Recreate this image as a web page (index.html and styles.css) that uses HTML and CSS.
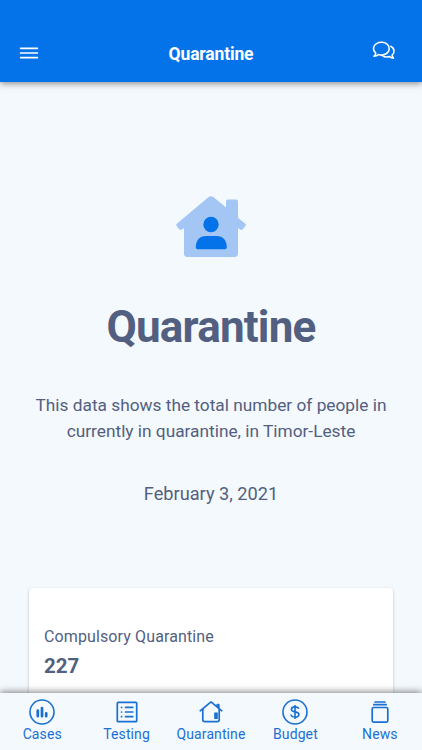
FILE: index.html
```html
<!DOCTYPE html>
<html lang="en">
<head>
    <meta charset="UTF-8">
    <meta name="viewport" content="width=device-width, initial-scale=1.0">
    <title>Quarantine</title>
    <link rel="stylesheet" href="styles.css">
</head>
<body>
    <div class="app">
        <header class="header">
            <button class="icon-button menu-button" aria-label="Menu">
                <svg width="20" height="12" viewBox="0 0 20 12" fill="none" stroke="currentColor" stroke-width="1.7" stroke-linecap="round">
                    <path d="M1.6 1.3h16.800M1.6 6h16.800M1.6 10.600h16.800"/>
                </svg>
            </button>
            <h2 class="header-title">Quarantine</h2>
            <button class="icon-button chat-button" aria-label="Chat">
                <svg width="24" height="20" viewBox="0 0 24 20" fill="none" stroke="currentColor" stroke-width="1.6" stroke-linecap="round" stroke-linejoin="round">
                    <path d="M3.8 12.3C.2 9.1 1 4.600 4.500 2.600C8 .5 12.900 .9 15.500 3.500C18.200 6.200 17.700 10.300 14.600 12.500C12.300 14.100 9.200 14.500 6.500 13.500C5.300 14.700 3.700 15.200 1.900 15.300C3.100 14.300 3.700 13.400 3.800 12.300z"/>
                    <path d="M18.800 5.300C22.600 7.300 23 11.700 20.100 14.100C20.200 15.300 20.700 16.300 21.500 17.200C20.100 17.200 18.700 16.700 17.600 15.500C15 16.400 12 15.900 10.100 14.300"/>
                </svg>
            </button>
        </header>

        <main class="content">
            <section class="intro">
                <svg class="intro-icon" width="70" height="62" viewBox="0 0 70 62">
                    <path fill="#a3c6f5" d="M32.300 1.300Q35 -.8 37.700 1.300L50 11.600V5.500Q50 3.500 52 3.500H60Q62 3.500 62 5.500V21.700L69.300 27.800Q70.300 28.800 69.500 29.800L66.800 33.200Q65.500 34.500 64 33.500L62 31.900V57.500Q62 61 58.500 61H11.500Q8 61 8 57.500V31.900L6 33.500Q4.500 34.500 3.200 33.200L.6 29.800Q-.3 28.800 .8 27.800z"/>
                    <circle cx="35" cy="28.500" r="7.700" fill="#0473ea"/>
                    <path fill="#0473ea" d="M19.800 51.300C19.800 44.500 23.500 40 30 40H40.500C47 40 50.800 44.500 50.800 51.300Q50.800 53.200 49 53.200H21.600Q19.800 53.200 19.800 51.300z"/>
                </svg>
                <h1 class="intro-title">Quarantine</h1>
                <p class="intro-text">This data shows the total number of people in currently in quarantine, in Timor-Leste</p>
                <p class="intro-date">February 3, 2021</p>
            </section>

            <section class="card">
                <div class="card-label">Compulsory Quarantine</div>
                <div class="card-number">227</div>
            </section>
        </main>

        <nav class="tabs">
            <a class="tab">
                <svg width="26" height="26" viewBox="0 0 26 26" fill="none" stroke="currentColor">
                    <circle cx="13" cy="13" r="12" stroke-width="1.600"/>
                    <path d="M8.800 11.500v5.700M13 9v8.200M17.200 14.300v2.900" stroke-width="2.700" stroke-linecap="round"/>
                </svg>
                <span>Cases</span>
            </a>
            <a class="tab">
                <svg width="26" height="26" viewBox="0 0 26 26" fill="none" stroke="currentColor" stroke-width="1.700" stroke-linecap="round">
                    <rect x="3.300" y="3.300" width="19.400" height="19.400" rx="1"/>
                    <path d="M7.500 8.300h.1M7.500 13h.1M7.500 17.700h.1M11.500 8.300h7.300M11.500 13h7.300M11.500 17.700h7.300"/>
                </svg>
                <span>Testing</span>
            </a>
            <a class="tab">
                <svg width="26" height="26" viewBox="0 0 26 26" fill="none" stroke="currentColor" stroke-width="1.700" stroke-linecap="round" stroke-linejoin="round">
                    <path d="M2.200 11.800L13 2.900L23.800 11.800"/>
                    <path d="M4.800 10.300V20.800Q4.800 22.700 6.700 22.700H19.300Q21.200 22.700 21.200 20.800V10.300"/>
                    <path d="M19.200 5.300h1.900v3.600l-1.900-1.600z" fill="currentColor" stroke-width="1"/>
                    <path d="M16.200 13.500h3.600v6.500h-3.600z" fill="currentColor" stroke="none"/>
                </svg>
                <span>Quarantine</span>
            </a>
            <a class="tab">
                <svg width="26" height="26" viewBox="0 0 26 26" fill="none" stroke="currentColor" stroke-width="1.600">
                    <circle cx="13" cy="13" r="12"/>
                    <path d="M16.700 9.900C16.400 8.500 15 7.900 13 7.900C10.900 7.900 9.400 8.800 9.400 10.400C9.400 13.700 16.900 12.100 16.900 15.500C16.900 17.200 15.300 18.100 13.100 18.100C10.700 18.100 9.200 17.200 9 15.500M13 6.100V19.900" stroke-width="1.600"/>
                </svg>
                <span>Budget</span>
            </a>
            <a class="tab">
                <svg width="26" height="26" viewBox="0 0 26 26" fill="none" stroke="currentColor" stroke-width="1.700" stroke-linecap="round">
                    <rect x="5.200" y="8.500" width="15.600" height="14.600" rx="1.500"/>
                    <path d="M6.800 5.700h12.400M8 3h10"/>
                </svg>
                <span>News</span>
            </a>
        </nav>
    </div>
</body>
</html>
```
FILE: styles.css
```css
:root {
    --primary: #0473ea;
    --tab: #1a70d2;
    --text: #535f80;
    --background: #f4f9fd;
    --white: #ffffff;
}

* {
    margin: 0;
    padding: 0;
    box-sizing: border-box;
}

body {
    font-family: Roboto, "Liberation Sans", sans-serif;
    background: var(--background);
    color: var(--text);
}

.app {
    display: flex;
    flex-direction: column;
    height: 100vh;
    overflow: hidden;
}

.header {
    display: flex;
    flex-shrink: 0;
    align-items: center;
    justify-content: space-between;
    height: 82px;
    padding: 25px 22px 0 19px;
    background: var(--primary);
    color: var(--white);
    box-shadow: 0 1px 7px rgba(0, 0, 0, 0.5);
    z-index: 1;
}

.header-title {
    margin-left: 3px;
    font-size: 17.5px;
    font-weight: 700;
    letter-spacing: -0.15px;
}

.icon-button {
    display: flex;
    width: 32px;
    border: none;
    background: none;
    color: inherit;
}

.menu-button {
    margin-bottom: 1px;
}

.chat-button {
    justify-content: center;
    margin-bottom: 6px;
}

.content {
    flex: 1;
    min-height: 0;
    padding: 0 29px;
    overflow: hidden;
}

.intro {
    display: flex;
    flex-direction: column;
    align-items: center;
    height: 506px;
    padding-top: 114px;
    text-align: center;
}

.intro-title {
    margin-top: 43px;
    font-size: 44px;
    font-weight: 700;
    line-height: 52px;
    letter-spacing: -0.8px;
}

.intro-text {
    margin-top: 40px;
    font-size: 17.3px;
    line-height: 25.5px;
}

.intro-date {
    margin-top: 37px;
    font-size: 18.2px;
    line-height: 26px;
}

.card {
    height: 180px;
    padding: 38px 15px;
    background: var(--white);
    border-radius: 4px;
    box-shadow: 0 1px 3px rgba(0, 0, 0, 0.25);
}

.card-label {
    font-size: 16px;
    line-height: 22px;
    letter-spacing: 0.12px;
}

.card-number {
    margin-top: 5px;
    font-size: 20.5px;
    font-weight: 700;
    line-height: 26px;
}

.tabs {
    display: flex;
    flex-shrink: 0;
    height: 57px;
    background: var(--background);
    box-shadow: 0 -1px 7px rgba(0, 0, 0, 0.5);
    z-index: 1;
}

.tab {
    display: flex;
    flex: 1 1 0;
    min-width: 0;
    flex-direction: column;
    align-items: center;
    padding-top: 6px;
    color: var(--tab);
    font-size: 14px;
    line-height: 18px;
    letter-spacing: 0.1px;
}
```
